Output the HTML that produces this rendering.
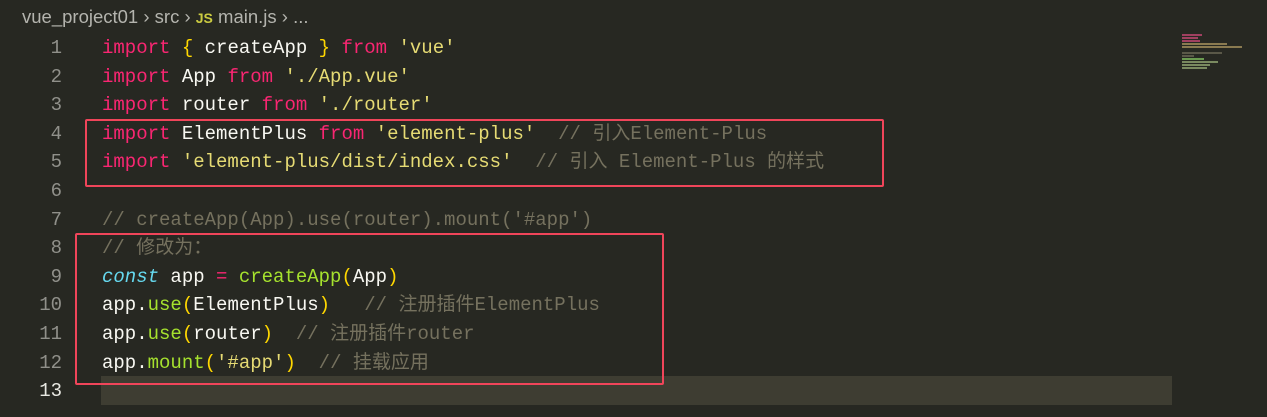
<!DOCTYPE html>
<html><head><meta charset="utf-8"><style>
body{margin:0;width:1267px;height:417px;background:#272822;overflow:hidden;position:relative;font-family:"Liberation Mono","Noto Sans CJK SC",monospace;}
.bc{position:absolute;left:22px;top:6px;font:18.5px "Liberation Sans","Noto Sans CJK SC",sans-serif;color:#b4b4ae;white-space:pre;}
.bc .js{color:#cbcb41;font-weight:bold;font-size:14px;}
.ln{position:absolute;left:0;width:62px;text-align:right;color:#90908a;font-size:19px;line-height:28.6px;}
.code{position:absolute;left:102px;font-size:19px;line-height:28.6px;color:#f8f8f2;}
.row{height:28.6px;white-space:pre;}
.k{color:#f92672}.s{color:#e6db74}.c{color:#75715e}.f{color:#a6e22e}.b{color:#ffd700}.i{color:#66d9ef;font-style:italic}
.hl{position:absolute;left:101px;top:376px;width:1071px;height:29px;background:#3e3d32;}
.box{position:absolute;border:2px solid #f0455a;border-radius:2px;}
.m{position:absolute;height:1.5px;}
</style></head><body>
<div class="bc">vue_project01 › src › <span class="js">JS</span> main.js › ...</div>
<div class="hl"></div>
<div class="m" style="left:1182px;top:34px;width:20px;background:#a04060"></div>
<div class="m" style="left:1182px;top:37px;width:16px;background:#a04060"></div>
<div class="m" style="left:1182px;top:40px;width:18px;background:#a04060"></div>
<div class="m" style="left:1182px;top:43px;width:45px;background:#8a7a50"></div>
<div class="m" style="left:1182px;top:46px;width:60px;background:#8a7a50"></div>
<div class="m" style="left:1182px;top:52px;width:40px;background:#5a5848"></div>
<div class="m" style="left:1182px;top:55px;width:12px;background:#5a5848"></div>
<div class="m" style="left:1182px;top:58px;width:22px;background:#6a9a50"></div>
<div class="m" style="left:1182px;top:61px;width:36px;background:#7a8a60"></div>
<div class="m" style="left:1182px;top:64px;width:28px;background:#7a8a60"></div>
<div class="m" style="left:1182px;top:67px;width:25px;background:#7a8a60"></div>
<div class="ln" style="top:34px">1<br>2<br>3<br>4<br>5<br>6<br>7<br>8<br>9<br>10<br>11<br>12<br><span style="color:#e8e8e2">13</span></div>
<div class="code" style="top:34px"><div class="row"><span class="k">import</span> <span class="b">{</span> createApp <span class="b">}</span> <span class="k">from</span> <span class="s">'vue'</span></div><div class="row"><span class="k">import</span> App <span class="k">from</span> <span class="s">'./App.vue'</span></div><div class="row"><span class="k">import</span> router <span class="k">from</span> <span class="s">'./router'</span></div><div class="row"><span class="k">import</span> ElementPlus <span class="k">from</span> <span class="s">'element-plus'</span>  <span class="c">// 引入Element-Plus</span></div><div class="row"><span class="k">import</span> <span class="s">'element-plus/dist/index.css'</span>  <span class="c">// 引入 Element-Plus 的样式</span></div><div class="row"> </div><div class="row"><span class="c">// createApp(App).use(router).mount('#app')</span></div><div class="row"><span class="c">// 修改为：</span></div><div class="row"><span class="i">const</span> app <span class="k">=</span> <span class="f">createApp</span><span class="b">(</span>App<span class="b">)</span></div><div class="row">app.<span class="f">use</span><span class="b">(</span>ElementPlus<span class="b">)</span>   <span class="c">// 注册插件ElementPlus</span></div><div class="row">app.<span class="f">use</span><span class="b">(</span>router<span class="b">)</span>  <span class="c">// 注册插件router</span></div><div class="row">app.<span class="f">mount</span><span class="b">(</span><span class="s">'#app'</span><span class="b">)</span>  <span class="c">// 挂载应用</span></div></div>
<div class="box" style="left:85px;top:119px;width:795px;height:64px"></div>
<div class="box" style="left:75px;top:233px;width:585px;height:148px"></div>
</body></html>
